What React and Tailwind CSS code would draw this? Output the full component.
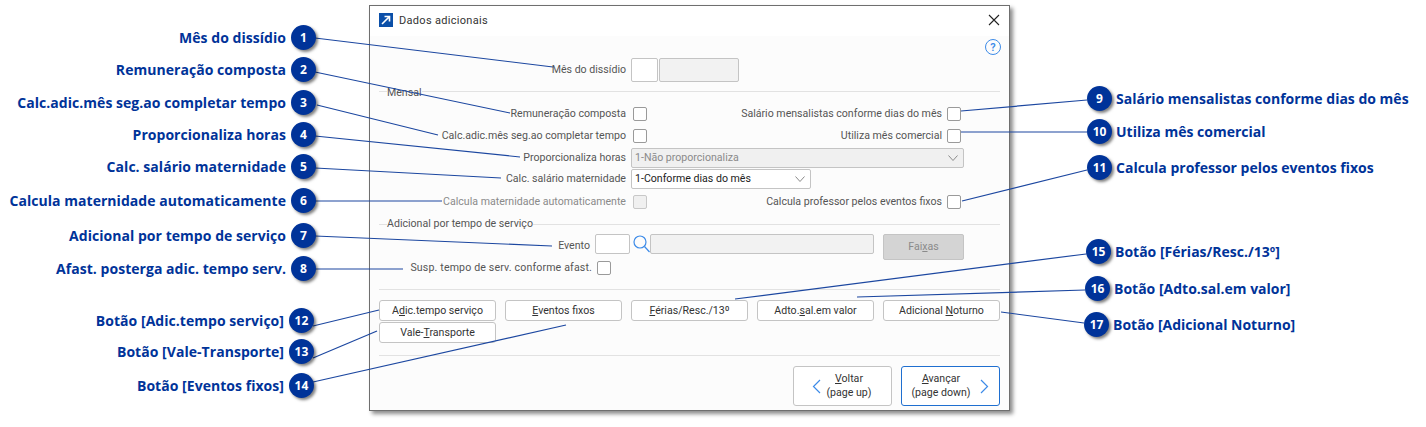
const ui = { fontFamily: 'Roboto, sans-serif' }
const callout = { fontFamily: '"Open Sans", sans-serif' }

const leftCallouts = [
  [1, 'Mês do dissídio', 38, 1110],
  [2, 'Remuneração composta', 70, 1110],
  [3, 'Calc.adic.mês seg.ao completar tempo', 103, 1110],
  [4, 'Proporcionaliza horas', 135, 1110],
  [5, 'Calc. salário maternidade', 167, 1110],
  [6, 'Calcula maternidade automaticamente', 201, 1110],
  [7, 'Adicional por tempo de serviço', 236, 1110],
  [8, 'Afast. posterga adic. tempo serv.', 269, 1110],
  [12, 'Botão [Adic.tempo serviço]', 321, 1112],
  [13, 'Botão [Vale-Transporte]', 352, 1112],
  [14, 'Botão [Eventos fixos]', 386, 1112],
]

const rightCallouts = [
  [9, 'Salário mensalistas conforme dias do mês', 99, 1087],
  [10, 'Utiliza mês comercial', 132, 1087],
  [11, 'Calcula professor pelos eventos fixos', 168, 1087],
  [15, 'Botão [Férias/Resc./13º]', 252, 1086],
  [16, 'Botão [Adto.sal.em valor]', 289, 1085],
  [17, 'Botão [Adicional Noturno]', 325, 1084],
]

const leaders = [
  [315, 38, 553, 67], [315, 72, 510, 113], [317, 105, 438, 135], [315, 136, 520, 157],
  [315, 168, 501, 178], [315, 201, 442, 201], [315, 236, 552, 246], [315, 269, 403, 269],
  [313, 326, 379, 310], [313, 358, 377, 331], [313, 382, 566, 325],
  [961, 111, 1087, 100], [961, 132, 1087, 132], [962, 201, 1087, 170],
  [735, 299, 1086, 254], [857, 297, 1085, 290], [1001, 312, 1084, 323],
]

function Badge({ n }) {
  return (
    <span className="flex h-[25px] w-[25px] shrink-0 items-center justify-center rounded-full bg-[#003399] text-[12px] font-bold text-white shadow-[2px_2px_3px_rgba(0,0,0,0.5)]">
      {n}
    </span>
  )
}

function Callouts() {
  return (
    <>
      <svg className="pointer-events-none absolute left-0 top-0 z-10" width="1426" height="427">
        {leaders.map(([x1, y1, x2, y2]) => (
          <line key={`${x1}-${y1}`} x1={x1} y1={y1} x2={x2} y2={y2} stroke="#1c47a0" strokeWidth="1.2" />
        ))}
      </svg>
      {leftCallouts.map(([n, text, y, r]) => (
        <div key={n} className="absolute z-20 flex items-center gap-[5px] text-[14px] font-bold tracking-[0.04px] text-[#003399]" style={{ ...callout, top: y - 13, right: r }}>
          <span className="whitespace-nowrap">{text}</span>
          <Badge n={n} />
        </div>
      ))}
      {rightCallouts.map(([n, text, y, x]) => (
        <div key={n} className="absolute z-20 flex items-center gap-[4px] text-[14px] font-bold text-[#003399]" style={{ ...callout, top: y - 13, left: x }}>
          <Badge n={n} />
          <span className="whitespace-nowrap">{text}</span>
        </div>
      ))}
    </>
  )
}

function Checkbox({ disabled, className = '' }) {
  return <span className={`h-[14px] w-[14px] shrink-0 rounded-[2px] border ${disabled ? 'border-[#c8c8c8] bg-[#f0f0f0]' : 'border-[#9a9a9a] bg-white'} ${className}`} />
}

function Label({ children, disabled, className = '' }) {
  return <span className={`whitespace-nowrap ${disabled ? 'text-[#8a8a8a]' : 'text-[#555]'} ${className}`}>{children}</span>
}

// label column ends right before the controls, at x=626
function Row({ label, disabled, h, children, right }) {
  return (
    <div className={`flex items-center ${h}`}>
      <div className="w-[247px] shrink-0 text-right"><Label disabled={disabled}>{label}</Label></div>
      <div className="ml-[5px] flex items-center">{children}</div>
      {right && (
        <div className="ml-auto mr-[39px] flex items-center gap-[5px]">
          <Label>{right}</Label>
          <Checkbox />
        </div>
      )}
    </div>
  )
}

function Legend({ text, h, textClass = '' }) {
  return (
    <div className={`flex items-center ${h}`}>
      <span className="h-px w-2 bg-[#e2e2e2]" />
      <span className={`text-[#555] ${textClass}`}>{text}</span>
      <span className="h-px flex-1 bg-[#e2e2e2]" />
    </div>
  )
}

function Chevron() {
  return (
    <svg width="10" height="6" viewBox="0 0 10 6" fill="none" stroke="#8a8a8a" strokeWidth="1">
      <path d="M.5 .5l4.5 5 4.5-5" />
    </svg>
  )
}

function Btn({ pre, key_, post, className = '' }) {
  return (
    <button className={`flex h-[21px] items-center justify-center rounded-[3px] border border-[#c4c4c4] bg-white text-[#333] ${className}`}>
      <span>{pre}<span className="underline">{key_}</span>{post}</span>
    </button>
  )
}

function Dialog() {
  return (
    <div className="ml-[369px] w-[641px] border border-[#6f6f6f] bg-[#fcfcfc] shadow-[3px_3px_4px_rgba(0,0,0,0.45)]" style={ui}>
      <div className="flex h-[30px] items-center bg-white pl-[9px] pr-[10px] text-[11px] text-[#333]">
        <span className="mb-[2px] flex h-[14px] w-[14px] items-center justify-center bg-[#0b4fa8]">
          <svg width="10" height="10" viewBox="0 0 10 10" fill="none" stroke="#fff" strokeWidth="1.6">
            <path d="M1 9l7-7M3.5 1.5H8.5V6.5" />
          </svg>
        </span>
        <span className="ml-[6px] tracking-[0.3px]">Dados adicionais</span>
        <svg className="mb-[2px] ml-auto mr-[-1px]" width="12" height="12" viewBox="0 0 12 12" stroke="#222" strokeWidth="1.1">
          <path d="M1 1l10 10M11 1L1 11" />
        </svg>
      </div>

      <div className="px-[9px] text-[10.6px]">
        <div className="flex h-[22px] items-center justify-end">
          <span className="mr-[-1px] flex h-[16px] w-[16px] items-center justify-center rounded-full border border-[#3d8be8] text-[11px] font-semibold leading-none text-[#3d8be8]">?</span>
        </div>

        <Row label="Mês do dissídio" h="h-[24px]">
          <span className="h-[24px] w-[27px] rounded-[2px] border border-[#c4c4c4] bg-white" />
          <span className="ml-px h-[24px] w-[80px] rounded-[2px] border border-[#c4c4c4] bg-[#f2f2f2]" />
        </Row>

        <Legend text="Mensal" h="h-[19px]" textClass="pt-[2px]" />

        <Row label="Remuneração composta" h="h-[22px] mt-[2px]" right="Salário mensalistas conforme dias do mês"><Checkbox className="ml-[2px]" /></Row>
        <Row label="Calc.adic.mês seg.ao completar tempo" h="h-[22px]" right="Utiliza mês comercial"><Checkbox className="ml-[2px]" /></Row>

        <Row label="Proporcionaliza horas" h="h-[21px]">
          <span className="flex h-[20px] w-[333px] items-center justify-between rounded-[2px] border border-[#c4c4c4] bg-[#f0f0f0] pl-[3px] pr-[5px] text-[#8a8a8a]">
            1-Não proporcionaliza <Chevron />
          </span>
        </Row>
        <Row label="Calc. salário maternidade" h="h-[21px]">
          <span className="flex h-[20px] w-[180px] items-center justify-between rounded-[2px] border border-[#c4c4c4] bg-white pl-[3px] pr-[5px] text-[#222]">
            1-Conforme dias do mês <Chevron />
          </span>
        </Row>
        <Row label="Calcula maternidade automaticamente" disabled h="h-[24px] mt-px" right="Calcula professor pelos eventos fixos"><Checkbox disabled className="ml-[2px]" /></Row>

        <Legend text="Adicional por tempo de serviço" h="h-[20px]" />

        <div className="flex h-[27px] items-start">
          <div className="flex w-[211px] justify-end pt-[4px]"><Label>Evento</Label></div>
          <span className="ml-[5px] h-[20px] w-[35px] rounded-[2px] border border-[#c4c4c4] bg-white" />
          <svg className="ml-[3px] mt-[1px]" width="17" height="18" viewBox="0 0 17 18" fill="none" stroke="#3d8be8" strokeWidth="1.2">
            <circle cx="7" cy="7" r="6" />
            <path d="M11.5 11.5l5 5.5" />
          </svg>
          <span className="h-[20px] w-[224px] rounded-[2px] border border-[#c4c4c4] bg-[#f2f2f2]" />
          <button className="ml-[9px] flex h-[26px] w-[81px] items-center justify-center rounded-[2px] border border-[#c4c4c4] bg-[#d4d4d4] text-[#8a8a8a]">
            <span>Fai<span className="underline">x</span>as</span>
          </button>
        </div>

        <div className="flex h-[14px] items-center">
          <div className="flex w-[213px] justify-end"><Label className="tracking-[0.15px]">Susp. tempo de serv. conforme afast.</Label></div>
          <Checkbox className="ml-[5px]" />
        </div>

        <div className="mt-[14px] h-px bg-[#e2e2e2]" />

        <div className="mt-[10px] grid grid-cols-5 gap-x-[9px] gap-y-px">
          <Btn pre="A" key_="d" post="ic.tempo serviço" />
          <Btn key_="E" post="ventos fixos" />
          <Btn key_="F" post="érias/Resc./13º" />
          <Btn pre="Adto." key_="s" post="al.em valor" />
          <Btn pre="Adicional " key_="N" post="oturno" />
          <Btn pre="Vale-" key_="T" post="ransporte" />
        </div>

        <div className="mt-[12px] h-px bg-[#e2e2e2]" />

        <div className="flex justify-end gap-[9px] pb-[4px] pt-[10px] text-[#333]">
          <button className="flex h-[40px] w-[99px] items-center rounded-[3px] border border-[#c4c4c4] bg-white pl-[18px]">
            <svg width="9" height="15" viewBox="0 0 9 15" fill="none" stroke="#3d8be8" strokeWidth="1.2"><path d="M8 1L1.5 7.5 8 14" /></svg>
            <span className="flex-1 pr-[14px] text-center leading-[14px]"><span className="underline">V</span>oltar<br />(page up)</span>
          </button>
          <button className="flex h-[40px] w-[99px] items-center rounded-[3px] border border-[#1f6fd0] bg-white pr-[10px]">
            <span className="flex-1 text-center leading-[14px]"><span className="underline">A</span>vançar<br />(page down)</span>
            <svg width="9" height="15" viewBox="0 0 9 15" fill="none" stroke="#3d8be8" strokeWidth="1.2"><path d="M1 1l6.5 6.5L1 14" /></svg>
          </button>
        </div>
      </div>
    </div>
  )
}

export default function App() {
  return (
    <div className="relative h-[427px] w-[1426px] overflow-hidden bg-white pt-[5px]" style={ui}>
      <Dialog />
      <Callouts />
    </div>
  )
}
